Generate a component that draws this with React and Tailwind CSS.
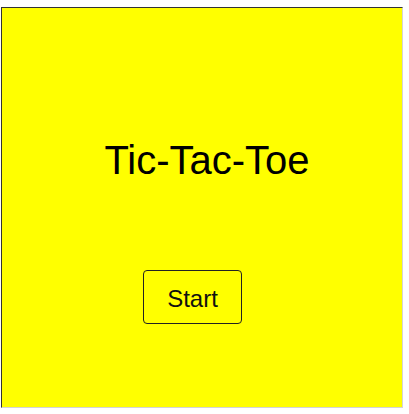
export default function App() {
  return (
    <div className="w-[409px] h-[414px] bg-white" style={{ fontFamily: '"Liberation Sans", Arial, sans-serif' }}>
      <div className="ml-[1px] pt-[7px]">
        <div className="w-[402px] h-[401px] bg-[#ffff00] border border-t-[#333333] border-l-[#333333] border-r-[#d4d4d4] border-b-[#d4d4d4] flex flex-col">
          <h1 className="mt-[129px] text-[40px] leading-[46px] text-black text-center pl-[10px] font-normal">Tic-Tac-Toe</h1>
          <button className="mt-[87px] ml-[141px] w-[99px] h-[54px] border border-[#222222] rounded-[4px] bg-transparent text-[24px] leading-[28px] text-[#111111] pt-[3px]">
            Start
          </button>
        </div>
      </div>
    </div>
  );
}
